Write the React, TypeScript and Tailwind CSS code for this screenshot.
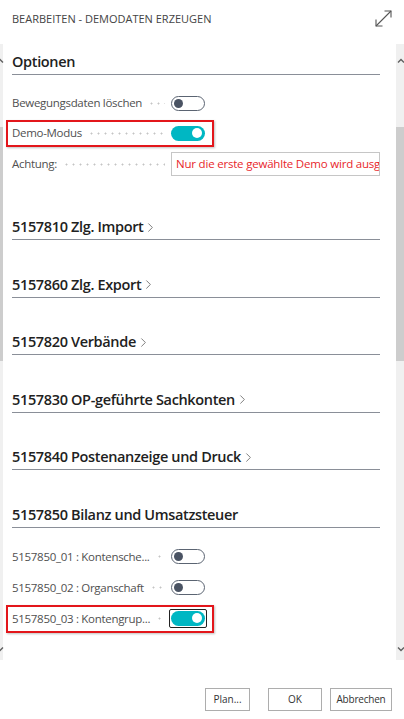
import React from 'react'
import { ChevronRight } from 'lucide-react'

// Dialog "Bearbeiten - Demodaten erzeugen"

const font = { fontFamily: '"Segoe UI", "Open Sans", "Noto Sans", sans-serif' }

function Toggle({ on, focus }: { on?: boolean; focus?: boolean }) {
  const sw = on ? (
    <div className="w-[34px] h-[15px] rounded-full bg-[#00b7c3] flex items-center justify-end pr-[3px]">
      <div className="w-[10px] h-[10px] rounded-full bg-white" />
    </div>
  ) : (
    <div className="w-[34px] h-[15px] rounded-full border-[1.5px] border-[#5b6472] bg-white flex items-center pl-[2px]">
      <div className="w-[9px] h-[9px] rounded-full bg-[#4a5363]" />
    </div>
  )
  if (!focus) return sw
  return <div className="border border-[#222] rounded-[2px] p-[1px] -m-[2px]">{sw}</div>
}

function Leader() {
  return (
    <div className="flex-1 h-[3px] mx-[6px] bg-[radial-gradient(circle,#c4c4c4_0.8px,transparent_1.2px)] bg-[length:7px_3px] bg-repeat-x" />
  )
}

function Field({
  label,
  children,
  boxed,
  h = 'h-[30px]',
}: {
  label: string
  children: React.ReactNode
  boxed?: boolean
  h?: string
}) {
  return (
    <div className={`relative flex items-center ${h}`}>
      {boxed && (
        <div className="absolute left-[-6px] top-[2px] bottom-[1px] w-[208px] border-2 border-[#e3161b] shadow-[1px_1px_2px_rgba(0,0,0,0.25)]" />
      )}
      <div className="w-[159px] flex items-center shrink-0">
        <span className="text-[11.5px] tracking-[-0.3px] text-[#505050] whitespace-nowrap">{label}</span>
        <Leader />
      </div>
      {children}
    </div>
  )
}

function Section({ title, chevron = true, first }: { title: string; chevron?: boolean; first?: boolean }) {
  return (
    <div className={`${first ? 'mt-[37px]' : 'mt-[34.6px]'} border-b border-[#8a8f98] pb-[2px]`}>
      <div className="flex items-center leading-[20px] text-[14.5px] tracking-[-0.35px] font-semibold text-[#212121]">
        {title}
        {chevron && <ChevronRight size={15} strokeWidth={1.2} className="text-[#555]" />}
      </div>
    </div>
  )
}

function ScrollStrip({ side }: { side: 'left' | 'right' }) {
  return (
    <div
      className={`relative flex flex-col bg-[#f0f0f0] shrink-0 ${side === 'left' ? 'w-[3px]' : 'w-[8px]'}`}
    >
      <div className="h-[83px]" />
      <div className="h-[234px] bg-[#cdcdcd]" />
      <svg
        className={`absolute top-[14px] ${side === 'left' ? 'left-[-4px]' : 'left-[1px]'}`}
        width="8"
        height="6"
        viewBox="0 0 8 6"
      >
        <path d="M1 4.5 L4 1.5 L7 4.5" fill="none" stroke="#606060" strokeWidth="1.4" />
      </svg>
      <svg
        className={`absolute bottom-[8px] ${side === 'left' ? 'left-[-4px]' : 'left-[1px]'}`}
        width="8"
        height="6"
        viewBox="0 0 8 6"
      >
        <path d="M1 1.5 L4 4.5 L7 1.5" fill="none" stroke="#606060" strokeWidth="1.4" />
      </svg>
    </div>
  )
}

export default function App() {
  return (
    <div className="w-[404px] h-[719px] bg-white flex flex-col overflow-hidden" style={font}>
      {/* Header */}
      <div className="h-[44px] shrink-0 flex items-center justify-between pl-[12px] pr-[11px] pb-[6px]">
        <span className="text-[11px] text-[#444]">BEARBEITEN - DEMODATEN ERZEUGEN</span>
        <svg width="19" height="19" viewBox="0 0 19 19" className="mb-[1px]">
          <g fill="none" stroke="#555" strokeWidth="1.1">
            <path d="M2 17 L17 2" />
            <path d="M10.5 2 H17 V8.5" />
            <path d="M2 10.5 V17 H8.5" />
          </g>
        </svg>
      </div>

      {/* Scroll area */}
      <div className="h-[616px] shrink-0 flex">
        <ScrollStrip side="left" />
        <div className="flex-1 pl-[9px] pr-[16px] overflow-hidden">
          <div className="mt-[8px] border-b border-[#8a8f98] pb-[2px]">
            <div className="leading-[20px] text-[14.5px] tracking-[-0.35px] font-semibold text-[#212121]">Optionen</div>
          </div>

          <div className="mt-[13px]">
            <Field label="Bewegungsdaten löschen">
              <Toggle />
            </Field>
            <Field label="Demo-Modus" boxed>
              <Toggle on />
            </Field>
            <Field label="Achtung:" h="h-[32px]">
              <div className="flex-1 h-[24px] border border-[#c6c6c6] flex items-center pl-[4px] overflow-hidden">
                <span className="text-[11.5px] tracking-[-0.2px] text-[#e8262b] whitespace-nowrap">
                  Nur die erste gewählte Demo wird ausg
                </span>
              </div>
            </Field>
          </div>

          <Section title="5157810 Zlg. Import" first />
          <Section title="5157860 Zlg. Export" />
          <Section title="5157820 Verbände" />
          <Section title="5157830 OP-geführte Sachkonten" />
          <Section title="5157840 Postenanzeige und Druck" />
          <Section title="5157850 Bilanz und Umsatzsteuer" chevron={false} />

          <div className="mt-[13px]">
            <Field label="5157850_01 : Kontensche..." h="h-[31px]">
              <Toggle />
            </Field>
            <Field label="5157850_02 : Organschaft" h="h-[31px]">
              <Toggle />
            </Field>
            <Field label="5157850_03 : Kontengrup..." h="h-[31px]" boxed>
              <Toggle on focus />
            </Field>
          </div>
        </div>
        <ScrollStrip side="right" />
      </div>

      {/* Footer */}
      <div className="flex-1 flex items-start justify-end pr-[12px] pt-[28px]">
        <button className="w-[45px] h-[23px] border border-[#adadad] bg-white text-[10px] text-[#333]">
          Plan...
        </button>
        <button className="ml-[18px] w-[54px] h-[23px] border border-[#adadad] bg-white text-[10px] text-[#333]">
          OK
        </button>
        <button className="ml-[8px] w-[62px] h-[23px] border border-[#adadad] bg-white text-[10px] tracking-[-0.2px] text-[#333]">
          Abbrechen
        </button>
      </div>
    </div>
  )
}
